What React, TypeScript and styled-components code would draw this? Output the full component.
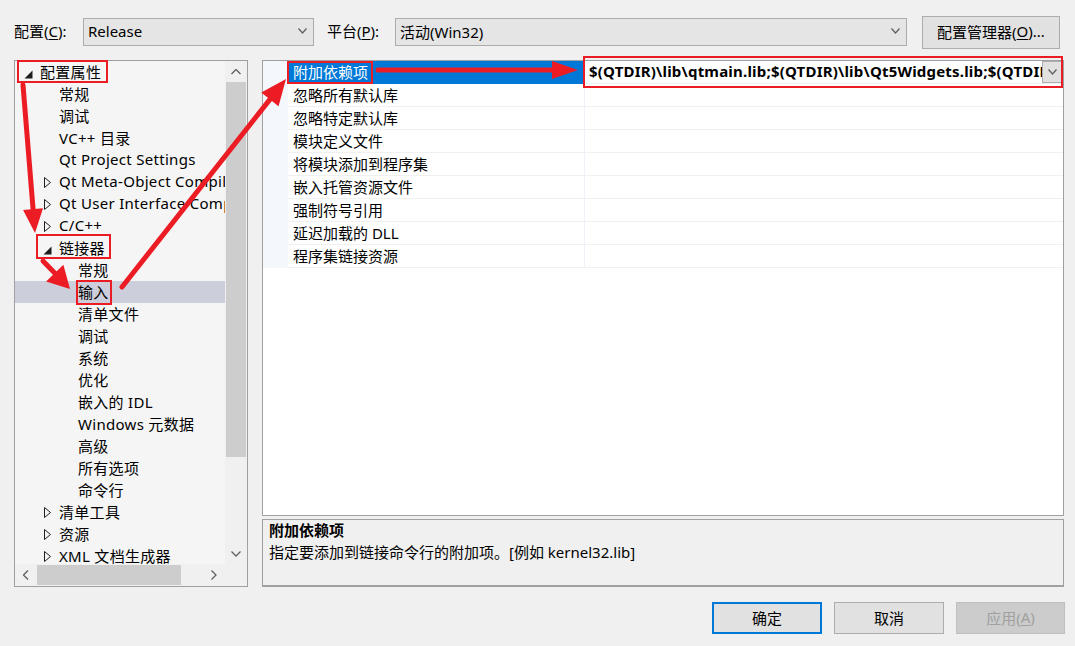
import React from 'react';
import styled, { createGlobalStyle, css } from 'styled-components';

const Global = createGlobalStyle`
  html, body { margin: 0; padding: 0; background: #f0f0f0; }
  body { font-family: "Noto Sans", "Noto Sans CJK SC", sans-serif; font-size: 15px; color: #000; }
  * { box-sizing: border-box; }
`;

const Page = styled.div`
  position: relative;
  width: 1075px;
  height: 646px;
  overflow: hidden;
  background: #f0f0f0;
  padding: 16px 0 0 14px;
  display: flex;
  flex-direction: column;
`;

const TopBar = styled.div`
  display: flex;
  align-items: center;
  height: 32px;
`;

const FieldLabel = styled.span<{ $w: number }>`
  width: ${(p) => p.$w}px;
  line-height: 20px;
  padding-bottom: 2px;
  white-space: nowrap;
`;

const Key = styled.span`
  text-decoration: underline;
  text-underline-offset: 2px;
`;

const Combo = styled.div<{ $w: number; $gapAfter: number }>`
  width: ${(p) => p.$w}px;
  height: 28px;
  margin-right: ${(p) => p.$gapAfter}px;
  background: #e5e5e5;
  border: 1px solid #acacac;
  display: flex;
  align-items: center;
  justify-content: space-between;
  padding: 0 6px 2px 4px;
  white-space: nowrap;
`;

const PushButton = styled.div<{ $w: number; $h?: number; $variant?: 'default' | 'normal' | 'disabled' }>`
  width: ${(p) => p.$w}px;
  height: ${(p) => p.$h ?? 32}px;
  display: flex;
  align-items: center;
  justify-content: center;
  padding-bottom: 2px;
  background: #e1e1e1;
  border: 1px solid #adadad;
  white-space: nowrap;
  ${(p) =>
    p.$variant === 'default' &&
    css`
      border: 2px solid #0078d7;
    `}
  ${(p) =>
    p.$variant === 'disabled' &&
    css`
      background: #cccccc;
      border-color: #bfbfbf;
      color: #a0a0a0;
    `}
`;

const Main = styled.div`
  display: flex;
  margin-top: 12px;
  height: 527px;
  gap: 14px;
`;

const TreePanel = styled.div`
  width: 234px;
  height: 527px;
  border: 1px solid #a0a0a0;
  background: #f5f5f5;
  display: grid;
  grid-template-columns: 210px 22px;
  grid-template-rows: 503px 22px;
`;

const TreeContent = styled.div`
  overflow: hidden;
  background: #f5f5f5;
  letter-spacing: 0.3px;
`;

const TreeRow = styled.div<{ $level: number; $selected?: boolean }>`
  height: 22px;
  display: flex;
  align-items: center;
  padding-left: ${(p) => 6 + p.$level * 19}px;
  white-space: nowrap;
  background: ${(p) => (p.$selected ? '#cccedb' : 'transparent')};
`;

const TreeText = styled.span`
  padding-bottom: 2px;
`;

const Expander = styled.span`
  width: 19px;
  height: 22px;
  flex: none;
  display: flex;
  align-items: center;
`;

const VScroll = styled.div`
  background: #f0f0f0;
  display: flex;
  flex-direction: column;
`;

const ScrollArrow = styled.div<{ $size: number }>`
  flex: none;
  width: ${(p) => p.$size}px;
  height: ${(p) => p.$size}px;
  display: flex;
  align-items: center;
  justify-content: center;
`;

const VThumb = styled.div`
  margin: 0 1px 0 1px;
  height: 375px;
  background: #cdcdcd;
`;

const VTrack = styled.div`
  flex: 1;
`;

const HScroll = styled.div`
  background: #f0f0f0;
  display: flex;
  align-items: stretch;
`;

const HThumb = styled.div`
  width: 144px;
  margin: 1px 0;
  background: #cdcdcd;
`;

const Corner = styled.div`
  background: #f0f0f0;
`;

const RightCol = styled.div`
  width: 802px;
  display: flex;
  flex-direction: column;
  gap: 3px;
`;

const GridPanel = styled.div`
  height: 456px;
  border: 1px solid #a0a0a0;
  background: #fff;
`;

const GridRow = styled.div`
  display: flex;
  height: 23px;
`;

const RowMargin = styled.div`
  width: 25px;
  background: #f4f7fc;
`;

const NameCell = styled.div<{ $selected?: boolean }>`
  width: 297px;
  padding: 0 0 2px 5px;
  display: flex;
  align-items: center;
  white-space: nowrap;
  border-bottom: 1px solid #f0f0f0;
  border-right: 1px solid #eef2f8;
  ${(p) =>
    p.$selected &&
    css`
      background: #0078d7;
      color: #fff;
      border-bottom-color: #0078d7;
    `}
`;

const ValueCell = styled.div`
  flex: 1;
  display: flex;
  align-items: center;
  border-bottom: 1px solid #f0f0f0;
  overflow: hidden;
`;

const ValueText = styled.span`
  flex: 1;
  overflow: hidden;
  white-space: nowrap;
  font-weight: 700;
  letter-spacing: 0.2px;
  padding: 0 0 2px 4px;
`;

const CellDrop = styled.div`
  flex: none;
  width: 21px;
  height: 22px;
  margin-top: -1px;
  background: #e1e1e1;
  border: 1px solid #adadad;
  display: flex;
  align-items: center;
  justify-content: center;
`;

const DescPanel = styled.div`
  height: 68px;
  border: 1px solid #a0a0a0;
  border-bottom-width: 2px;
  background: #f0f0f0;
  padding: 0 6px;
`;

const DescTitle = styled.div`
  line-height: 21px;
  font-weight: 700;
`;

const DescText = styled.div`
  line-height: 22px;
`;

const Footer = styled.div`
  display: flex;
  justify-content: flex-end;
  gap: 12px;
  margin-top: 15px;
  padding-right: 10px;
`;

const Overlay = styled.svg`
  position: absolute;
  left: 0;
  top: 0;
  pointer-events: none;
`;

const Chevron = ({ dir, w = 9, color = '#606060' }: { dir: 'up' | 'down' | 'left' | 'right'; w?: number; color?: string }) => {
  const h = Math.round(w / 2);
  const pts =
    dir === 'down'
      ? `0.5,0.5 ${w / 2},${h} ${w - 0.5},0.5`
      : dir === 'up'
      ? `0.5,${h} ${w / 2},0.5 ${w - 0.5},${h}`
      : dir === 'left'
      ? `${h},0.5 0.5,${w / 2} ${h},${w - 0.5}`
      : `0.5,0.5 ${h},${w / 2} 0.5,${w - 0.5}`;
  const vw = dir === 'down' || dir === 'up' ? w : h + 1;
  const vh = dir === 'down' || dir === 'up' ? h + 1 : w;
  return (
    <svg width={vw} height={vh} viewBox={`0 0 ${vw} ${vh}`}>
      <polyline points={pts} fill="none" stroke={color} strokeWidth={1.3} />
    </svg>
  );
};

const OpenTri = () => (
  <svg width="12" height="22" viewBox="0 0 12 22">
    <polygon points="11.5,9.5 11.5,17.5 3.5,17.5" fill="#1e1e1e" />
  </svg>
);

const ClosedTri = () => (
  <svg width="12" height="22" viewBox="0 0 12 22">
    <polygon points="4.5,6.5 10.5,11.5 4.5,16.5" fill="none" stroke="#1e1e1e" strokeWidth="1" />
  </svg>
);

type TreeItem = { l: number; t: string; e?: 'open' | 'closed'; sel?: boolean };

const tree: TreeItem[] = [
  { l: 0, e: 'open', t: '配置属性' },
  { l: 1, t: '常规' },
  { l: 1, t: '调试' },
  { l: 1, t: 'VC++ 目录' },
  { l: 1, t: 'Qt Project Settings' },
  { l: 1, e: 'closed', t: 'Qt Meta-Object Compiler' },
  { l: 1, e: 'closed', t: 'Qt User Interface Compiler' },
  { l: 1, e: 'closed', t: 'C/C++' },
  { l: 1, e: 'open', t: '链接器' },
  { l: 2, t: '常规' },
  { l: 2, t: '输入', sel: true },
  { l: 2, t: '清单文件' },
  { l: 2, t: '调试' },
  { l: 2, t: '系统' },
  { l: 2, t: '优化' },
  { l: 2, t: '嵌入的 IDL' },
  { l: 2, t: 'Windows 元数据' },
  { l: 2, t: '高级' },
  { l: 2, t: '所有选项' },
  { l: 2, t: '命令行' },
  { l: 1, e: 'closed', t: '清单工具' },
  { l: 1, e: 'closed', t: '资源' },
  { l: 1, e: 'closed', t: 'XML 文档生成器' },
];

const props = [
  '附加依赖项',
  '忽略所有默认库',
  '忽略特定默认库',
  '模块定义文件',
  '将模块添加到程序集',
  '嵌入托管资源文件',
  '强制符号引用',
  '延迟加载的 DLL',
  '程序集链接资源',
];

const RED = '#ec1c24';

const Arrow = ({ s, t, L, W }: { s: [number, number]; t: [number, number]; L: number; W: number }) => {
  const dx = t[0] - s[0];
  const dy = t[1] - s[1];
  const len = Math.hypot(dx, dy);
  const ux = dx / len;
  const uy = dy / len;
  const bx = t[0] - ux * L;
  const by = t[1] - uy * L;
  const nx = -uy;
  const ny = ux;
  const p1 = `${t[0]},${t[1]}`;
  const p2 = `${bx + (nx * W) / 2},${by + (ny * W) / 2}`;
  const p3 = `${bx - (nx * W) / 2},${by - (ny * W) / 2}`;
  return (
    <g>
      <line x1={s[0]} y1={s[1]} x2={bx + ux * 2} y2={by + uy * 2} stroke={RED} strokeWidth={5} strokeLinecap="round" />
      <polygon points={`${p1} ${p2} ${p3}`} fill={RED} />
    </g>
  );
};

export default function App() {
  return (
    <>
      <Global />
      <Page>
        <TopBar>
          <FieldLabel $w={69}>
            配置(<Key>C</Key>):
          </FieldLabel>
          <Combo $w={231} $gapAfter={13}>
            <span>Release</span>
            <Chevron dir="down" w={9} />
          </Combo>
          <FieldLabel $w={68}>
            平台(<Key>P</Key>):
          </FieldLabel>
          <Combo $w={512} $gapAfter={15}>
            <span>活动(Win32)</span>
            <Chevron dir="down" w={9} />
          </Combo>
          <PushButton $w={138} $h={33}>
            配置管理器(<Key>O</Key>)...
          </PushButton>
        </TopBar>

        <Main>
          <TreePanel>
            <TreeContent>
              {tree.map((it, i) => (
                <TreeRow key={i} $level={it.l} $selected={it.sel}>
                  <Expander>{it.e === 'open' ? <OpenTri /> : it.e === 'closed' ? <ClosedTri /> : null}</Expander>
                  <TreeText>{it.t}</TreeText>
                </TreeRow>
              ))}
            </TreeContent>
            <VScroll>
              <ScrollArrow $size={21}>
                <Chevron dir="up" w={10} />
              </ScrollArrow>
              <VThumb />
              <VTrack />
              <ScrollArrow $size={21}>
                <Chevron dir="down" w={10} />
              </ScrollArrow>
            </VScroll>
            <HScroll>
              <ScrollArrow $size={22}>
                <Chevron dir="left" w={10} />
              </ScrollArrow>
              <HThumb />
              <VTrack />
              <ScrollArrow $size={22}>
                <Chevron dir="right" w={10} />
              </ScrollArrow>
            </HScroll>
            <Corner />
          </TreePanel>

          <RightCol>
            <GridPanel>
              {props.map((p, i) => (
                <GridRow key={i}>
                  <RowMargin />
                  <NameCell $selected={i === 0}>{p}</NameCell>
                  <ValueCell>
                    {i === 0 && (
                      <>
                        <ValueText>$(QTDIR)\lib\qtmain.lib;$(QTDIR)\lib\Qt5Widgets.lib;$(QTDIR)\lib\Qt5Gui.lib;$(QTDIR)\lib\Qt5Core.lib</ValueText>
                        <CellDrop>
                          <Chevron dir="down" w={9} />
                        </CellDrop>
                      </>
                    )}
                  </ValueCell>
                </GridRow>
              ))}
            </GridPanel>
            <DescPanel>
              <DescTitle>附加依赖项</DescTitle>
              <DescText>指定要添加到链接命令行的附加项。[例如 kernel32.lib]</DescText>
            </DescPanel>
          </RightCol>
        </Main>

        <Footer>
          <PushButton $w={110} $variant="default">确定</PushButton>
          <PushButton $w={110}>取消</PushButton>
          <PushButton $w={109} $variant="disabled">
            应用(<Key>A</Key>)
          </PushButton>
        </Footer>

        <Overlay width={1075} height={646} viewBox="0 0 1075 646">
          <g fill="none" stroke={RED} strokeWidth={2}>
            <rect x={18} y={61} width={89} height={21} />
            <rect x={37} y={235} width={73} height={23} />
            <rect x={77} y={281} width={34} height={23} />
            <rect x={288} y={62} width={84} height={21} />
            <rect x={584} y={57} width={478} height={30} />
          </g>
          <Arrow s={[23, 85]} t={[35, 233]} L={24} W={20} />
          <Arrow s={[43, 261]} t={[70, 289]} L={22} W={24} />
          <Arrow s={[122, 287]} t={[286, 79]} L={26} W={22} />
          <Arrow s={[378, 70]} t={[578, 70]} L={26} W={18} />
        </Overlay>
      </Page>
    </>
  );
}
